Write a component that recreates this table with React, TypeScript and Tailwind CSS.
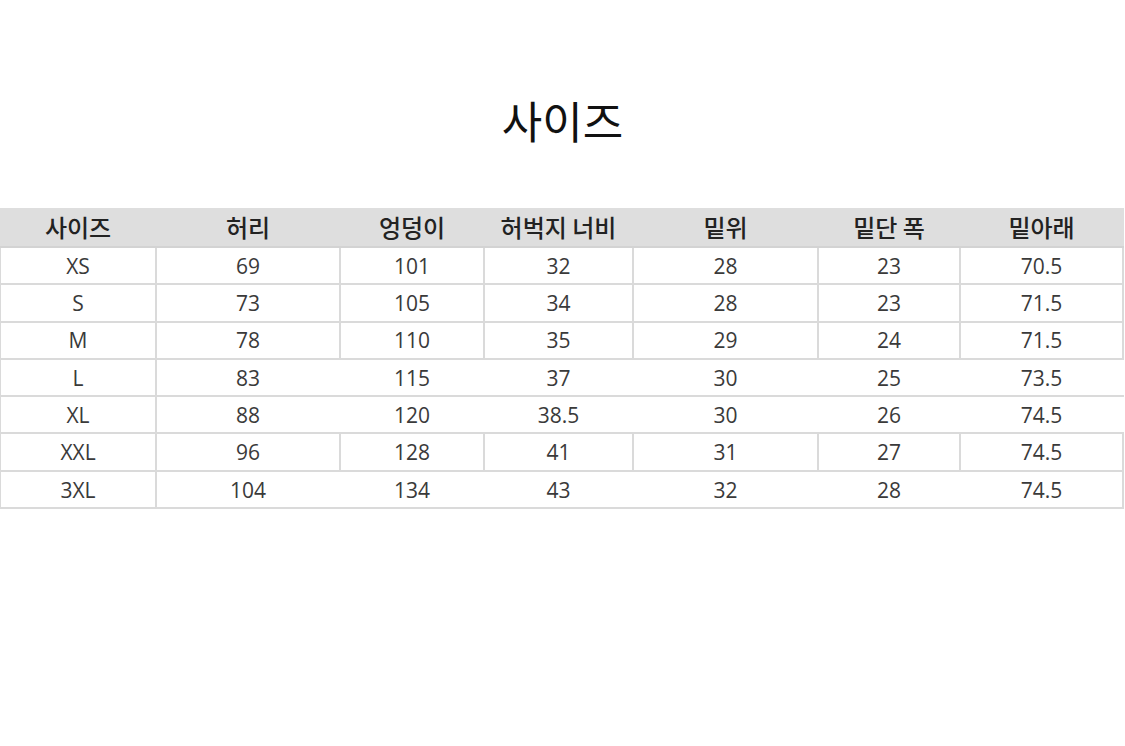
import React from 'react'

const headers = ['사이즈', '허리', '엉덩이', '허벅지 너비', '밑위', '밑단 폭', '밑아래']

// full = every column divider drawn, edge = only first divider + right edge
const rows: { cells: string[]; lines: 'full' | 'edge' | 'first' }[] = [
  { cells: ['XS', '69', '101', '32', '28', '23', '70.5'], lines: 'full' },
  { cells: ['S', '73', '105', '34', '28', '23', '71.5'], lines: 'full' },
  { cells: ['M', '78', '110', '35', '29', '24', '71.5'], lines: 'full' },
  { cells: ['L', '83', '115', '37', '30', '25', '73.5'], lines: 'first' },
  { cells: ['XL', '88', '120', '38.5', '30', '26', '74.5'], lines: 'first' },
  { cells: ['XXL', '96', '128', '41', '31', '27', '74.5'], lines: 'full' },
  { cells: ['3XL', '104', '134', '43', '32', '28', '74.5'], lines: 'edge' },
]

const cols = 'grid grid-cols-[156px_184px_144px_149px_185px_142px_163px]'

function cellBorder(i: number, lines: string) {
  if (i === 0) return 'border-r-2 border-[#dadada]'
  if (i === 6) return lines === 'first' ? 'border-r-2 border-transparent' : 'border-r-2 border-[#dadada]'
  return lines === 'full' ? 'border-r-2 border-[#dadada]' : 'border-r-2 border-transparent'
}

export default function App() {
  return (
    <div
      className="w-[1125px] h-[746px] bg-white overflow-hidden"
      style={{ fontFamily: '"Open Sans", "Noto Sans CJK KR", sans-serif' }}
    >
      <div className="pt-[90px] h-[208px] text-center text-[44px] leading-[60px] text-[#111]" style={{ fontFamily: '"Noto Sans CJK KR", sans-serif' }}>
        사이즈
      </div>

      <div className="w-[1124px]">
        <div className={`${cols} h-[40px] bg-[#dedede] border-b-2 border-[#d3d3d3]`}>
          {headers.map((h) => (
            <div
              key={h}
              className="flex items-center justify-center text-[24px] font-medium text-[#222]"
              style={{ fontFamily: '"Noto Sans CJK KR", sans-serif' }}
            >
              {h}
            </div>
          ))}
        </div>
        {rows.map((r) => (
          <div key={r.cells[0]} className={`${cols} h-[37.3px] border-b-2 border-l border-[#dadada]`}>
            {r.cells.map((c, i) => (
              <div
                key={i}
                className={`flex items-center justify-center pt-[2px] text-[21px] text-[#3a3a3a] ${cellBorder(i, r.lines)}`}
              >
                {c}
              </div>
            ))}
          </div>
        ))}
      </div>
    </div>
  )
}
